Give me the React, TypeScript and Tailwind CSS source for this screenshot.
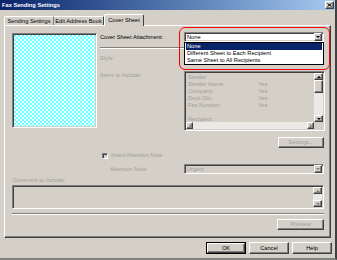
import React from "react";

const raised =
  "border border-t-white border-l-white border-r-[#404040] border-b-[#404040] shadow-[inset_-1px_-1px_#808080]";
const sunken =
  "border border-t-[#808080] border-l-[#808080] border-r-white border-b-white shadow-[inset_1px_1px_#404040,inset_-1px_-1px_#d4d0c8]";

function Arrow({ dir, dim }: { dir: "up" | "down" | "left" | "right"; dim?: boolean }) {
  const pts: Record<string, string> = {
    down: "0,0 4,0 2,2",
    up: "0,2 4,2 2,0",
    left: "2,0 2,4 0,2",
    right: "0,0 0,4 2,2",
  };
  const vb = dir === "up" || dir === "down" ? "0 0 4 2" : "0 0 2 4";
  const w = dir === "up" || dir === "down" ? 4 : 2;
  const h = dir === "up" || dir === "down" ? 2 : 4;
  return (
    <svg width={w} height={h} viewBox={vb}>
      <polygon points={pts[dir]} fill={dim ? "#808080" : "#000"} />
    </svg>
  );
}

function ArrowBtn({ dir, dim, className = "" }: { dir: "up" | "down" | "left" | "right"; dim?: boolean; className?: string }) {
  return (
    <div className={`flex items-center justify-center bg-[#d4d0c8] ${raised} ${className}`}>
      <Arrow dir={dir} dim={dim} />
    </div>
  );
}

function Combo({ text, dim }: { text: string; dim?: boolean }) {
  return (
    <div className={`flex h-[10px] w-[140px] items-center ${sunken} ${dim ? "bg-[#d4d0c8]" : "bg-white"}`}>
      <span className={`flex-1 pl-[2px] ${dim ? "text-[#a09d98]" : "text-black"}`}>{text}</span>
      <ArrowBtn dir="down" dim={dim} className="mr-[1px] h-[8px] w-[8px]" />
    </div>
  );
}

function Btn({ label, w, dim, def }: { label: string; w: string; dim?: boolean; def?: boolean }) {
  return (
    <div className={`${w} ${def ? "border border-black" : ""}`}>
      <div className={`flex h-full w-full items-center justify-center bg-[#d4d0c8] ${raised} ${dim ? "text-[#a09d98]" : "text-black"}`}>
        {label}
      </div>
    </div>
  );
}

const items: [string, string][] = [
  ["Sender", ""],
  ["Sender Name:", "Yes"],
  ["Company:", "Yes"],
  ["Dept./Div.:", "Yes"],
  ["Fax Number:", "Yes"],
  ["", ""],
  ["Recipient", ""],
];

export default function App() {
  return (
    <div className="flex h-[260px] w-[337px] flex-col overflow-hidden border-r-2 border-b-2 border-r-[#404040] border-b-[#808080] bg-[#d4d0c8] font-['Liberation_Sans',Arial,sans-serif] text-[5.7px] leading-[7px] text-black">
      {/* title bar */}
      <div className="flex h-[10px] shrink-0 items-center bg-gradient-to-r from-[#0a246a] to-[#a6caf0] pl-[2px] pr-[1px]">
        <span className="flex-1 font-bold text-white">Fax Sending Settings</span>
        <div className={`flex h-[8px] w-[9px] items-center justify-center bg-[#d4d0c8] ${raised}`}>
          <svg width="5" height="4" viewBox="0 0 5 4">
            <path d="M0.5 0.5 L4.5 3.5 M4.5 0.5 L0.5 3.5" stroke="#000" strokeWidth="1" />
          </svg>
        </div>
      </div>

      {/* tabs */}
      <div className="flex h-[15px] shrink-0 items-end pl-[4px]">
        <div className="flex h-[9px] w-[50px] items-center justify-center rounded-tl-[2px] border-t border-l border-t-white border-l-white border-r border-r-[#808080]">
          Sending Settings
        </div>
        <div className="flex h-[9px] w-[50px] items-center justify-center border-t border-t-white border-r border-r-[#404040]">
          Edit Address Book
        </div>
        <div className="relative z-10 -mb-px flex h-[12px] w-[40px] items-start justify-center rounded-tl-[2px] rounded-tr-[2px] border-t border-l border-t-white border-l-white border-r border-r-[#404040] bg-[#d4d0c8] pt-[2px]">
          Cover Sheet
        </div>
      </div>

      {/* tab panel */}
      <div className={`mx-[4px] flex h-[213px] shrink-0 flex-col bg-[#d4d0c8] pt-[6px] pl-[7px] ${raised}`}>
        <div className="flex items-start">
          <div className={`mt-[1px] h-[95px] w-[85px] ${sunken} p-[1px]`}>
            <div className="h-full w-full bg-[#70ffff] bg-[linear-gradient(45deg,#e8ffff_25%,transparent_25%,transparent_75%,#e8ffff_75%),linear-gradient(45deg,#e8ffff_25%,transparent_25%,transparent_75%,#e8ffff_75%)] bg-[length:4px_4px] bg-[position:0_0,2px_2px]" />
          </div>

          <div className="ml-[3px] grid w-[224px] grid-cols-[84px_140px]">
            <div className="flex h-[10px] items-center">Cover Sheet Attachment:</div>
            <div className="relative z-20">
              <Combo text="None" />
              {/* dropdown list */}
              <div className="absolute top-[10px] left-0 w-[140px] border border-black bg-white">
                <div className="mx-px h-[7px] bg-[#0a246a] pl-[1px] text-white">None</div>
                <div className="h-[7px] pl-[2px]">Different Sheet to Each Recipient</div>
                <div className="h-[7px] pl-[2px]">Same Sheet to All Recipients</div>
              </div>
              {/* red highlight */}
              <div className="pointer-events-none absolute -top-[5px] -left-[5px] h-[43px] w-[151px] rounded-[6px] border-[1.5px] border-[#ff0000]" />
            </div>

            <div className="col-span-2 mt-[5px] h-[2px] border-t border-b border-t-[#808080] border-b-white" />

            <div className="mt-[4px] flex h-[10px] items-center text-[#a09d98]">Style:</div>
            <div className="mt-[4px] h-[10px]" />

            <div className="mt-[9px] text-[#a09d98]">Items to Include:</div>
            <div className={`mt-[8px] flex h-[60px] w-[141px] flex-col ${sunken} p-[1px]`}>
              <div className="flex min-h-0 flex-1">
                <div className="flex-1 pt-[1px] pl-[2px] text-[#a09d98]">
                  {items.map(([a, b], i) => (
                    <div key={i} className="flex h-[7px]">
                      <span className="w-[70px]">{a}</span>
                      <span>{b}</span>
                    </div>
                  ))}
                </div>
                <div className="flex w-[9px] flex-col bg-[#ebe9e5]">
                  <ArrowBtn dir="up" className="h-[7px] w-[9px]" />
                  <div className={`h-[13px] w-[9px] bg-[#d4d0c8] ${raised}`} />
                  <div className="flex-1" />
                  <ArrowBtn dir="down" className="h-[7px] w-[9px]" />
                </div>
              </div>
              <div className="flex h-[7px] bg-[#ebe9e5]">
                <ArrowBtn dir="left" dim className="h-[7px] w-[7px]" />
                <div className="flex-1" />
                <ArrowBtn dir="right" dim className="h-[7px] w-[7px]" />
                <div className="w-[9px] bg-[#d4d0c8]" />
              </div>
            </div>

            <div className="col-span-2 mt-[6px] flex justify-end">
              <Btn label="Settings..." w="w-[46px] h-[11px]" dim />
            </div>
          </div>
        </div>

        {/* attention note */}
        <div className="mt-[4px] ml-[90px] flex h-[7px] items-center text-[#a09d98]">
          <div className={`mr-[3px] h-[6px] w-[6px] bg-[#d4d0c8] ${sunken}`} />
          <span>Insert Attention Note</span>
        </div>
        <div className="mt-[5px] flex items-center">
          <span className="ml-[98px] w-[74px] text-[#a09d98]">Attention Note:</span>
          <Combo text="Urgent" dim />
        </div>

        {/* comment */}
        <div className="mt-[3px] ml-[1px] h-[7px] text-[#a09d98]">Comment to Include:</div>
        <div className={`mt-[1px] flex h-[24px] w-[312px] ${sunken} p-[1px]`}>
          <div className="flex-1" />
          <div className="flex w-[9px] flex-col bg-[#ebe9e5]">
            <ArrowBtn dir="up" dim className="h-[7px] w-[9px]" />
            <div className="flex-1" />
            <ArrowBtn dir="down" dim className="h-[7px] w-[9px]" />
          </div>
        </div>

        <div className="mt-[4px] h-[2px] w-[312px] border-t border-b border-t-[#808080] border-b-white" />

        <div className="mt-[4px] flex w-[312px] justify-end">
          <Btn label="Preview" w="w-[47px] h-[11px]" dim />
        </div>
      </div>

      {/* dialog buttons */}
      <div className="mt-[4px] flex justify-end gap-[3px] pr-[3px]">
        <Btn label="OK" w="w-[40px] h-[12px]" def />
        <Btn label="Cancel" w="w-[40px] h-[12px]" />
        <Btn label="Help" w="w-[40px] h-[12px]" />
      </div>
    </div>
  );
}
